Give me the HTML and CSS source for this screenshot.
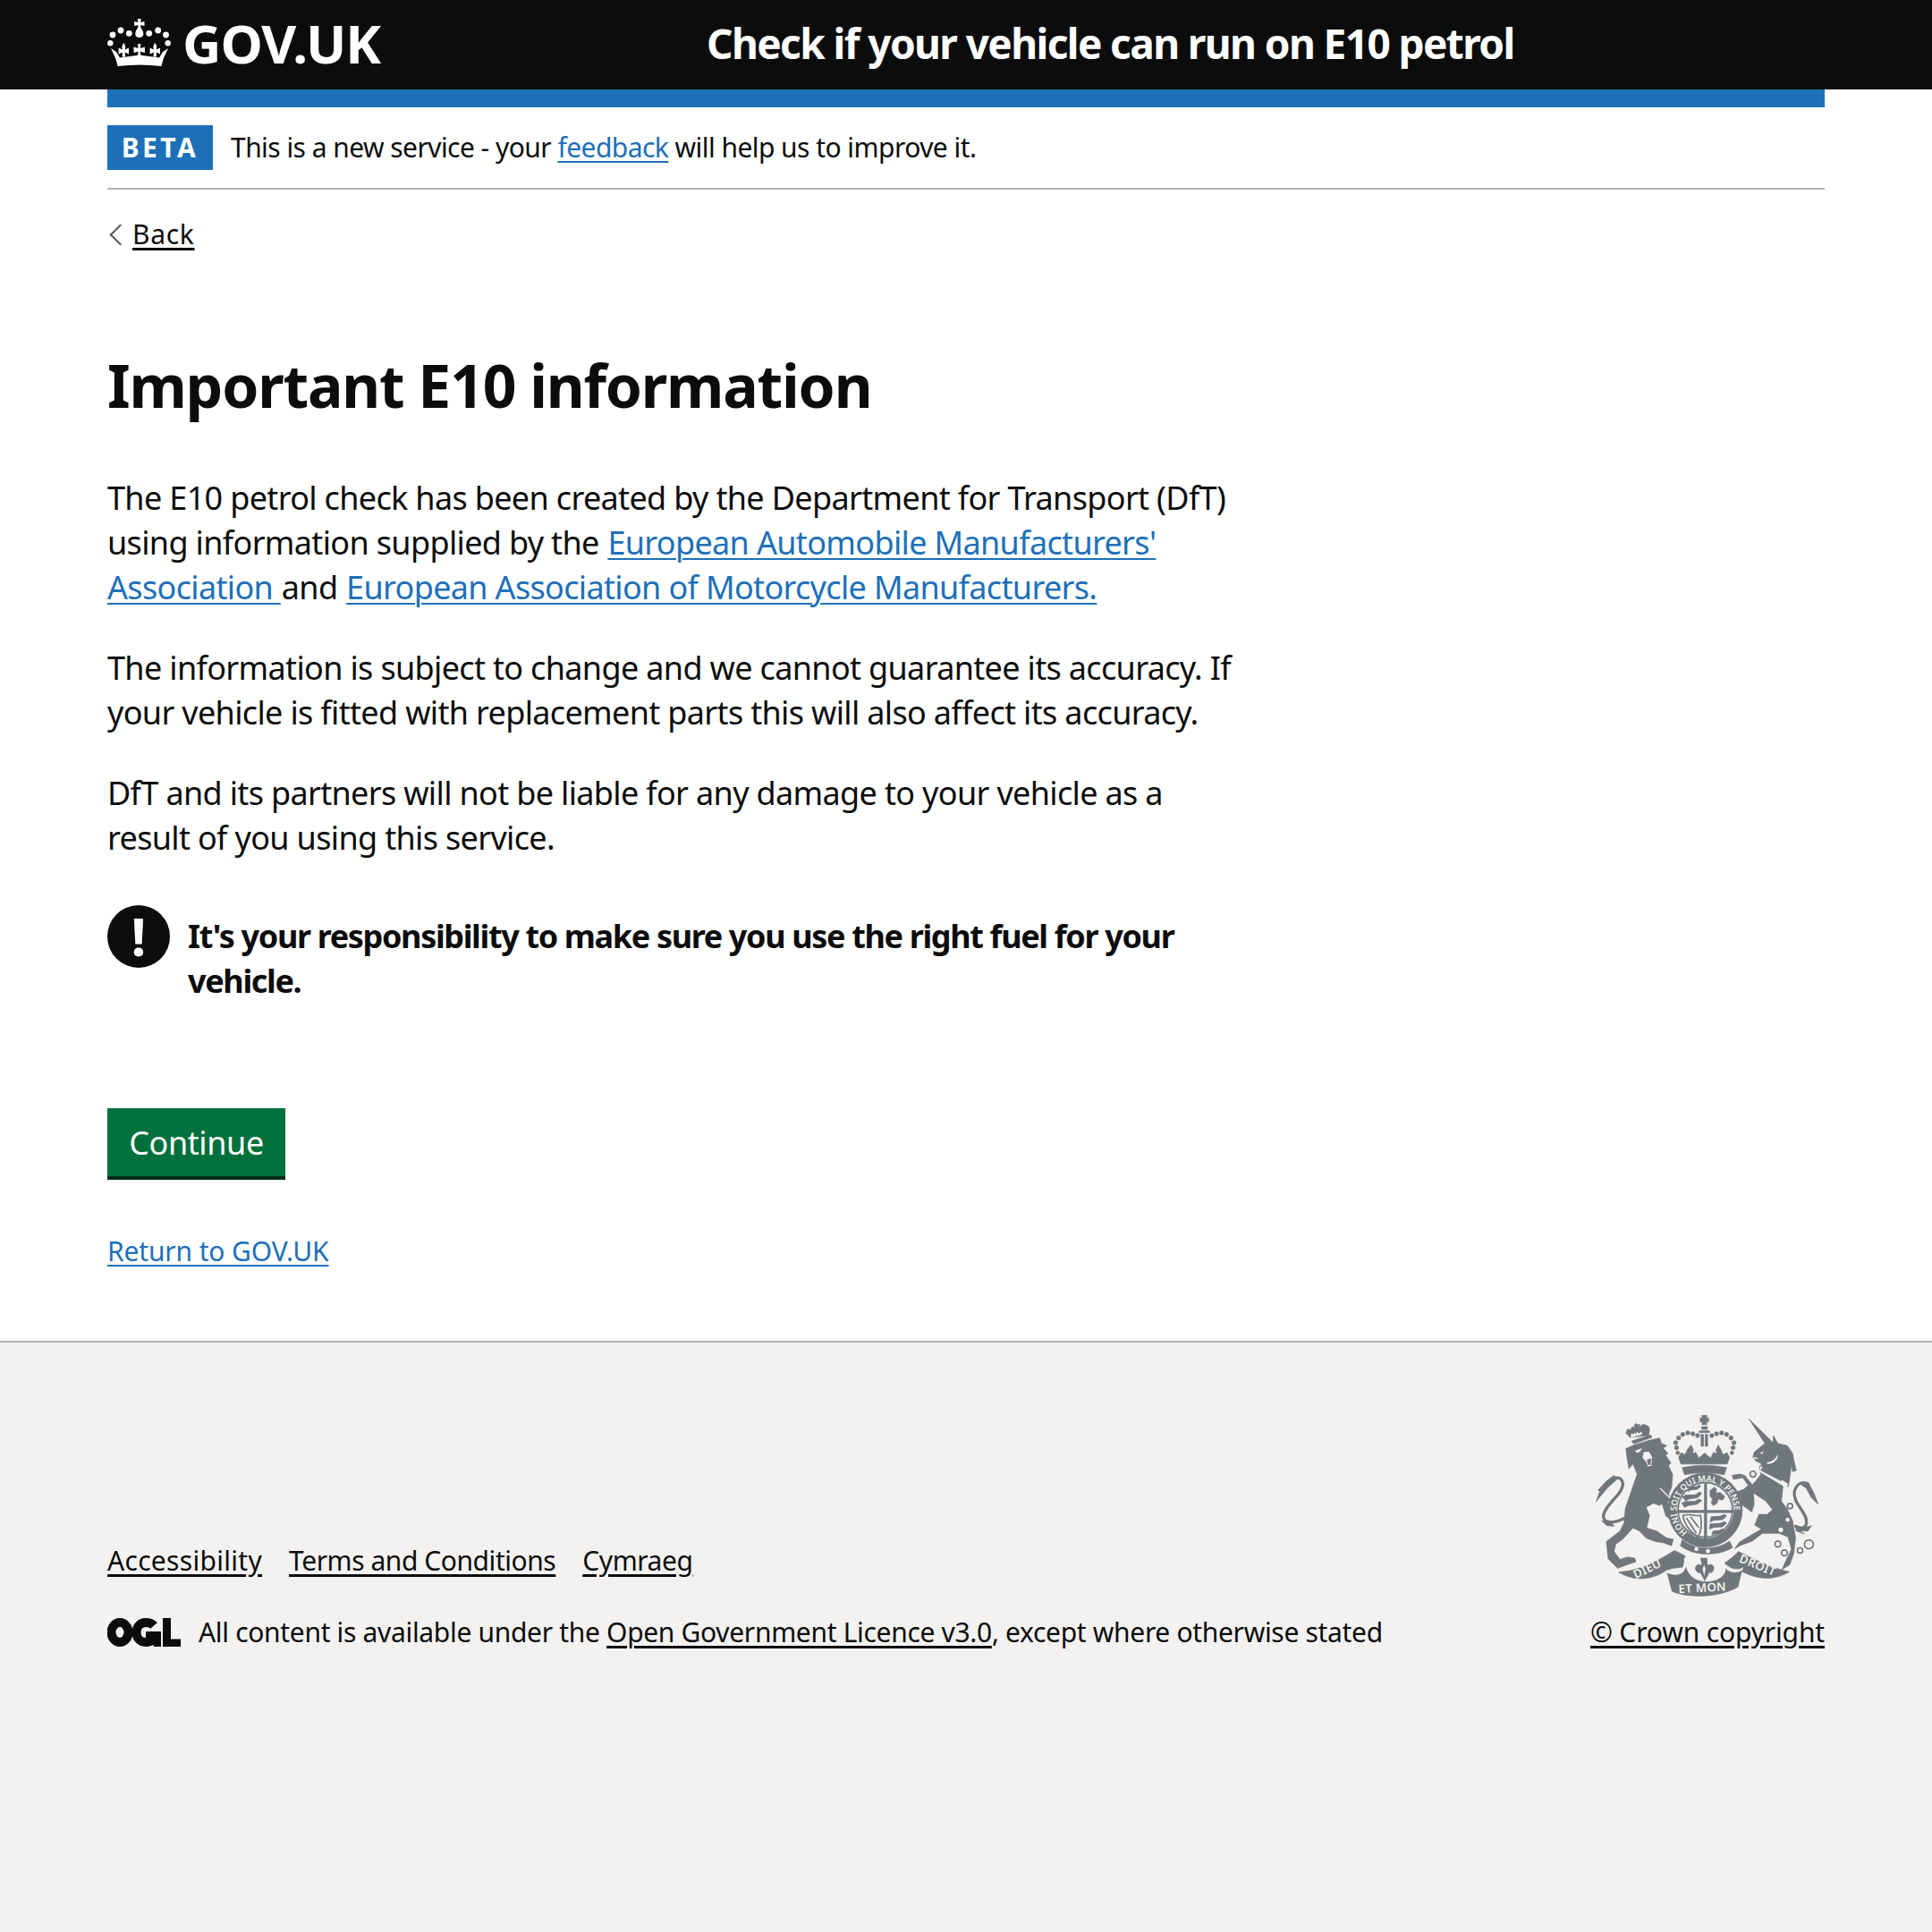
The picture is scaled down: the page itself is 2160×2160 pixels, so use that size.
FILE: index.html
```html
<!DOCTYPE html>
<html lang="en">
<head>
<meta charset="utf-8">
<title>Important E10 information</title>
<link rel="stylesheet" href="styles.css">
</head>
<body>
<header class="masthead">
  <div class="masthead-inner">
    <a class="logo" href="#">
      <svg class="crown" viewBox="0 -1 72 54" aria-hidden="true">
        <g fill="#fff">
          <circle cx="6" cy="17" r="3.4"/><circle cx="15" cy="12" r="3.4"/><circle cx="24.300" cy="15.300" r="3.400"/>
          <circle cx="46.700" cy="15.300" r="3.400"/><circle cx="56.700" cy="12" r="3.400"/><circle cx="65.500" cy="17" r="3.400"/>
          <circle cx="3.300" cy="26.300" r="3.200"/><circle cx="67.700" cy="26.300" r="3.200"/>
          <path d="M33.700 -1h4l-.5 4 4.300-1v5l-4.300-1 .1 3c2.200 2.500 3.200 5 3 7.500-.2 2.300-2 3.500-4.500 3.500s-4.300-1.200-4.500-3.500c-.2-2.500.8-5 3-7.500l.1-3-4.300 1V2l4.300 1z"/>
          <path d="M4 32l6 4 4 6.500 22-3 22 3 4-6.500 6-4-5.500 12L60.500 52Q36 49 11.500 52L9.500 44z"/>
          <path d="M18.300 26c2.200 2.800 2.200 5 1.400 7.500l4.300-2v7l-4.300-2 .3 5h-3.400l.3-5-4.300 2v-7l4.300 2c-.8-2.500-.8-4.700 1.400-7.500z"/>
          <path d="M53.300 26c2.200 2.800 2.200 5 1.400 7.500l4.300-2v7l-4.300-2 .3 5h-3.400l.3-5-4.300 2v-7l4.300 2c-.8-2.500-.8-4.700 1.400-7.500z"/>
          <path d="M34 27h3.400l-.5 5 5-1.500v6.500l-5-1.500.5 5.500H34l.5-5.500-5 1.500v-6.500l5 1.500z"/>
        </g>
      </svg>
      <span class="logo-text">GOV.UK</span>
    </a>
    <a class="service-name" href="#">Check if your vehicle can run on E10 petrol</a>
  </div>
</header>

<div class="page">
  <div class="blue-bar"></div>
  <div class="phase">
    <strong class="phase-tag">BETA</strong>
    <span class="phase-text">This is a new service - your <a class="link" href="#">feedback</a> will help us to improve it.</span>
  </div>
  <a class="back" href="#"><span class="back-text">Back</span></a>

  <main class="main">
    <h1 class="title">Important E10 information</h1>
    <p class="body">The E10 petrol check has been created by the Department for Transport (DfT) using information supplied by the <a class="link" href="#">European Automobile Manufacturers' Association </a>and <a class="link" href="#">European Association of Motorcycle Manufacturers.</a></p>
    <p class="body">The information is subject to change and we cannot guarantee its accuracy. If your vehicle is fitted with replacement parts this will also affect its accuracy.</p>
    <p class="body">DfT and its partners will not be liable for any damage to your vehicle as a result of you using this service.</p>
    <div class="warning">
      <span class="warning-icon">!</span>
      <strong class="warning-text">It's your responsibility to make sure you use the right fuel for your vehicle.</strong>
    </div>
    <a class="button" href="#">Continue</a>
    <p class="return"><a class="link" href="#">Return to GOV.UK</a></p>
  </main>
</div>

<footer class="footer">
  <div class="footer-inner">
    <div class="footer-meta">
      <ul class="footer-links">
        <li class="footer-item-wide"><a class="footer-link" href="#">Accessibility</a></li>
        <li><a class="footer-link" href="#">Terms and Conditions</a></li>
        <li><a class="footer-link" href="#">Cymraeg</a></li>
      </ul>
      <div class="licence">
        <svg class="ogl" viewBox="0 0 82 34" aria-hidden="true">
          <ellipse cx="14" cy="17" rx="9.500" ry="11" fill="none" stroke="#0b0c0c" stroke-width="10"/>
          <path d="M52 9.500C49.500 6.500 46.500 6 43 6c-6.500 0-10.500 5-10.500 11S36.500 28 43 28c3 0 6-1 8.500-3" fill="none" stroke="#0b0c0c" stroke-width="10"/>
          <path d="M43 16h17v17h-8l-1-3-3 0 2-7h-7z" fill="#0b0c0c"/>
          <path d="M62 1h9v23.500h11V33H62z" fill="#0b0c0c"/>
        </svg>
        <span class="licence-text">All content is available under the <a class="footer-link" href="#">Open Government Licence v3.0</a>, except where otherwise stated</span>
      </div>
    </div>
    <div class="copyright">
      <svg class="crest" viewBox="70 65 755 612" role="img" aria-label="Royal coat of arms">
        <defs>
          <path id="garter" d="M379 461A97 97 0 1 1 497 464"/>
        </defs>

        <!-- lion, drawn in a local frame -->
        <g transform="translate(60 60)">
          <path class="crest-fill" d="M112 118L140 106 190 90 226 82 232 100 250 108 238 116 254 134 246 140 264 166 256 176 270 206 266 250 256 270 262 290 252 300 268 312 282 342 262 358 246 344 240 322 234 304 224 310 206 302 180 316 192 344 182 386 216 396 250 420 272 424 266 446 240 436 212 432 180 420 158 396 136 386 100 425 78 440 72 465 92 492 118 484 142 488 146 500 116 510 84 522 52 490 46 432 92 396 106 368 110 320 130 262 150 204 136 170 122 186 116 150z"/>
          <path class="crest-line" d="M110 352C82 366 58 372 42 360 26 345 44 320 72 288 98 262 110 240 96 222 80 208 55 222 36 248"/>
          <path class="crest-fill" d="M12 296L24 262 18 258 46 228 72 208 82 222 50 250 32 272z"/>
          <path class="crest-fill" d="M30 362L62 366 72 380 48 378z"/>
          <path class="crest-fill" d="M126 80L112 66 117 52 127 54 134 44 143 48 140 38 147 33 152 38 160 36 156 48 168 36 178 38 190 44 192 58 188 74z"/>
          <path class="crest-bg" d="M128 72l5-6 3 5 5-7 4 5 6-8 4 6 9-6 3 4-3 7-34 8z"/>
          <path class="crest-fill" d="M132 92L196 72 200 80 138 102z"/>
          <path class="crest-bg" d="M142 126L166 116 160 128 150 132z"/>
          <path class="crest-bg" d="M172 130L190 128 200 146 198 176 186 178 180 162 168 148z"/>
          <path class="crest-fill" d="M184 156L196 152 194 172 187 172z"/>
          <path d="M228 252L262 286" stroke="#f3f2f1" stroke-width="4" fill="none"/>
          <path class="crest-bg" d="M184 318L204 308 224 316 233 310 238 326 244 348 258 362 240 362 222 378 214 392 186 384 194 344z"/>
        </g>

        <!-- unicorn, drawn in a local frame -->
        <g transform="translate(435 60)">
          <path class="crest-fill" d="M153 18L218 82 234 98 235 74 250 100 282 108 300 134 304 156 312 192 300 196 296 172 290 218 286 246 268 240 262 296 282 322 300 362 310 420 304 472 290 510 264 526 280 490 296 458 284 416 254 404 224 404 198 404 164 430 126 444 104 456 120 434 160 410 194 390 172 376 186 340 214 340 232 324 210 296 168 268 170 306 162 332 116 298 110 264 134 256 150 242 132 216 100 222 96 208 120 204 138 208 164 240 178 224 192 206 188 178 196 170 176 160 166 146 170 130 206 100z"/>
          <path class="crest-bg" d="M192 176L286 238 278 250 188 196z"/>
          <path class="crest-fill" d="M194 190l6-12 5 8 6-6 2 10 8-6 1 11 9-5 0 11 9-4 2 11 9-3 1 11 8-2 7-2-5 15-70-36z"/>
          <path class="crest-bg" d="M214 164C232 162 244 152 250 136 252 156 236 170 214 170z"/>
          <path class="crest-bg" d="M188 134l14-8-4 10z"/>
          <path class="crest-bg" d="M168 146l18 4-14 3z"/>
          <path class="crest-line" d="M306 378C330 392 350 388 346 358 340 325 300 300 306 262 314 232 340 226 356 242"/>
          <path class="crest-fill" d="M322 234L352 232 372 268 386 306 362 282 346 252z"/>
          <path class="crest-fill" d="M310 380L342 384 364 378 352 396 326 396 340 406 312 396z"/>
          <g class="crest-ring">
            <circle cx="166" cy="204" r="10"/><circle cx="155" cy="288" r="10"/><circle cx="291" cy="312" r="9"/>
            <circle cx="250" cy="440" r="10"/><circle cx="272" cy="470" r="10"/><circle cx="325" cy="462" r="9"/><circle cx="355" cy="441" r="15"/>
          </g>
          <circle class="crest-bg" cx="283" cy="358" r="7"/><circle class="crest-bg" cx="260" cy="392" r="8"/>
        </g>

        <!-- royal crown -->
        <g class="crest-fill">
          <path d="M428 66h18l-3 10 8-3v16l-8-3 3 11h-18l3-11-8 3V73l8 3z"/>
          <path d="M428 104h19v9h-19zM426 130h8v40h-8zM440 130h8v40h-8z M420 118h34v6h-34z"/>
          <path d="M392 166l8 16-4 14 12-6 10 20 18-16 4 0 18 16 10-20 12 6-4-14 8-16 8 14 8 18 14-6 8 16-8 22H358l-8-22 8-16 14 6 8-18z"/>
          <path d="M362 242Q437 226 512 242L504 266Q437 252 370 266z"/>
          <circle cx="343" cy="175" r="7"/><circle cx="340" cy="158" r="7"/><circle cx="350" cy="142" r="7"/><circle cx="364" cy="130" r="7"/><circle cx="381" cy="125" r="7"/><circle cx="398" cy="128" r="7"/><circle cx="414" cy="134" r="7"/><circle cx="462" cy="134" r="7"/><circle cx="478" cy="128" r="7"/><circle cx="495" cy="125" r="7"/><circle cx="512" cy="130" r="7"/><circle cx="527" cy="142" r="7"/><circle cx="537" cy="158" r="7"/><circle cx="534" cy="175" r="7"/><circle cx="347" cy="192" r="6"/><circle cx="530" cy="192" r="6"/>
        </g>

        <!-- garter and shield -->
        <circle class="crest-fill" cx="440" cy="385" r="125"/>
        <circle class="crest-bg" cx="440" cy="385" r="96"/>
        <path d="M441 295V500M346 390H534" stroke="#6f777b" stroke-width="10" fill="none"/>
        <circle cx="440" cy="385" r="92" fill="none" stroke="#6f777b" stroke-width="5"/>
        <g class="crest-fill">
          <path d="M362 340l14-6 30 0 16-10 6 6-14 14-28 4-12 6z M360 362l14-6 30 0 16-8 8 6-16 12-28 4-14 6z M376 312l14-6 20 0 10-6 5 5-12 10-22 3-10 5z"/>
          <path d="M456 320l14-12 8 6-2 14 14-2 16 14-8 12-14-4-4 14-12 8-8-8 4-14-8-10z"/>
          <path d="M460 408l30-2 16-6 6 6-14 12-30 2-12 6z M456 432l34-2 16-6 6 6-14 12-30 2-14 6z M466 456l22-2 12-6 4 6-12 10-20 2-10 4z"/>
        </g>
        <g fill="none" stroke="#6f777b" stroke-width="5">
          <path d="M364 404C384 396 404 406 424 404 430 436 426 458 416 476 390 460 370 436 364 404z"/>
          <path d="M376 412L410 464M390 408L418 444"/>
        </g>
        <text class="crest-motto crest-garter"><textPath href="#garter">HONI SOIT QUI MAL Y PENSE</textPath></text>
        <path class="crest-fill" d="M362 486c40 34 112 38 160 4l10 22c-50 30-128 30-176-6z"/>
        <circle class="crest-bg" cx="410" cy="517" r="7"/><circle class="crest-bg" cx="449" cy="524" r="7"/>

        <!-- motto -->
        <path class="crest-fill" d="M148 595C210 590 260 570 336 522L372 540 366 578 330 582 306 590C270 616 208 632 148 595z"/>
        <path class="crest-fill" d="M552 525C590 545 660 580 724 594 670 626 610 622 548 584 528 584 516 572 505 565 525 550 540 540 552 525z"/>
        <path class="crest-fill" d="M310 592C350 610 380 590 370 550 370 580 385 625 440 628 500 628 520 590 506 568 530 595 552 590 566 580L550 645C490 680 390 685 328 660z"/>
        <path class="crest-bg" d="M308 588C340 606 374 590 368 548L376 548C382 600 350 616 308 596z"/>
        <path class="crest-bg" d="M506 566C526 592 552 590 568 578L566 588C548 600 522 600 504 576z"/>
        <path class="crest-fill" d="M424 548h22v16c0 4 2 6 4 8 6-4 14-4 18 4 4 10-4 24-16 20-2 8-6 14-14 28-6-14-12-20-14-28-12 4-20-10-16-20 4-8 12-8 18-4 2-2 2-4 2-8z"/>
        <path class="crest-bg" d="M436 570l5 14-5 24-5-24z"/>
        <text class="crest-motto" x="205" y="618" transform="rotate(-26 205 618)">DIEU</text>
        <text class="crest-motto" x="350" y="666" transform="rotate(-3 350 666)">ET MON</text>
        <text class="crest-motto" x="552" y="560" transform="rotate(22 552 560)">DROIT</text>
      </svg>
      <a class="footer-link copyright-link" href="#">© Crown copyright</a>
    </div>
  </div>
</footer>
</body>
</html>
```
FILE: styles.css
```css
* { box-sizing: border-box; }
html, body { margin: 0; padding: 0; min-height: 2160px; }
body {
  display: flex;
  flex-direction: column;
  font-family: "Noto Sans", "Liberation Sans", sans-serif;
  color: #0b0c0c;
  background: #f3f2f1;
}
a { color: inherit; }

.masthead { background: #0b0c0c; height: 100px; padding: 0 120px; }
.masthead-inner { display: flex; align-items: center; height: 100px; }
.logo { display: flex; align-items: center; gap: 12px; width: 670px; padding-bottom: 4px; color: #fff; text-decoration: none; }
.crown { display: block; width: 72px; height: 54px; }
.logo-text { font-size: 60px; font-weight: 700; line-height: 96px; letter-spacing: -1px; }
.service-name { padding-bottom: 3px; color: #fff; font-size: 46px; font-weight: 700; line-height: 97px; letter-spacing: -1.6px; text-decoration: none; white-space: nowrap; }

.page { background: #fff; padding: 0 120px 80px; border-bottom: 2px solid #b1b4b6; }
.blue-bar { height: 20px; background: #1d70b8; }
.phase { display: flex; align-items: center; gap: 20px; height: 92px; padding: 20px 0; border-bottom: 2px solid #b1b4b6; font-size: 30px; line-height: 50px; }
.phase-tag { display: block; width: 118px; height: 50px; background: #1d70b8; color: #fff; font-size: 30px; font-weight: 700; letter-spacing: 3.5px; text-align: center; }
.phase-text { letter-spacing: -0.55px; }
.link { color: #1d70b8; text-decoration: underline; text-decoration-thickness: 2px; text-underline-offset: 4px; }

.back { display: inline-block; position: relative; margin-top: 30px; padding-left: 28px; font-size: 30px; line-height: 40px; letter-spacing: 0.7px; text-decoration: none; }
.back::before { content: ""; position: absolute; left: 6px; top: 12px; width: 15px; height: 15px; border-left: 2px solid #505a5f; border-bottom: 2px solid #505a5f; transform: rotate(45deg); }
.back-text { text-decoration: underline; text-decoration-thickness: 3px; text-underline-offset: 4px; }

.main { width: 1260px; padding-top: 108px; }
.title { margin: 0 0 62px; font-size: 66px; line-height: 80px; font-weight: 700; letter-spacing: -1.2px; }
.body { margin: 0 0 40px; font-size: 36px; line-height: 50px; letter-spacing: -0.66px; }
.body .link { margin: 0 1px; }
.warning { display: flex; gap: 20px; margin: 50px 0 117px; }
.warning-icon { flex: none; width: 70px; height: 70px; border-radius: 50%; background: #0b0c0c; color: #fff; font-size: 60px; font-weight: 700; line-height: 68px; text-align: center; }
.warning-text { padding-top: 10px; font-size: 36px; line-height: 50px; font-weight: 700; letter-spacing: -1.35px; }
.button { display: block; width: 199px; height: 80px; background: #00703c; border-bottom: 4px solid #002d18; color: #fff; font-size: 36px; line-height: 78px; letter-spacing: -0.4px; text-align: center; text-decoration: none; }
.return { margin: 60px 0 0; font-size: 30px; line-height: 40px; letter-spacing: -0.15px; }

.footer { flex: 1; padding: 81px 120px 0; }
.footer-inner { display: flex; justify-content: space-between; align-items: flex-end; }
.footer-meta { display: flex; flex-direction: column; gap: 40px; }
.footer-links { display: flex; gap: 30px; margin: 0; padding: 0; list-style: none; font-size: 30px; line-height: 40px; letter-spacing: -0.45px; }
.footer-item-wide { letter-spacing: 0.3px; }
.footer-link { color: #0b0c0c; text-decoration: underline; text-decoration-thickness: 3px; text-underline-offset: 4px; }
.licence { display: flex; align-items: center; gap: 20px; font-size: 30px; line-height: 40px; }
.licence-text { letter-spacing: -0.32px; }
.ogl { display: block; width: 82px; height: 34px; }
.copyright { display: flex; flex-direction: column; align-items: center; gap: 20px; font-size: 30px; line-height: 40px; }
.copyright-link { letter-spacing: -0.15px; }
.crest { display: block; width: 250px; height: 203px; }
.crest-fill { fill: #6f777b; stroke: #6f777b; stroke-width: 2; stroke-linejoin: round; }
.crest-bg { fill: #f3f2f1; }
.crest-line { fill: none; stroke: #6f777b; stroke-width: 10; }
.crest-ring { fill: none; stroke: #6f777b; stroke-width: 5; }
.crest-motto { fill: #f3f2f1; font-family: "Noto Sans", sans-serif; font-size: 40px; font-weight: 600; letter-spacing: 1px; }
.crest-garter { font-size: 28px; letter-spacing: 0; }
```
